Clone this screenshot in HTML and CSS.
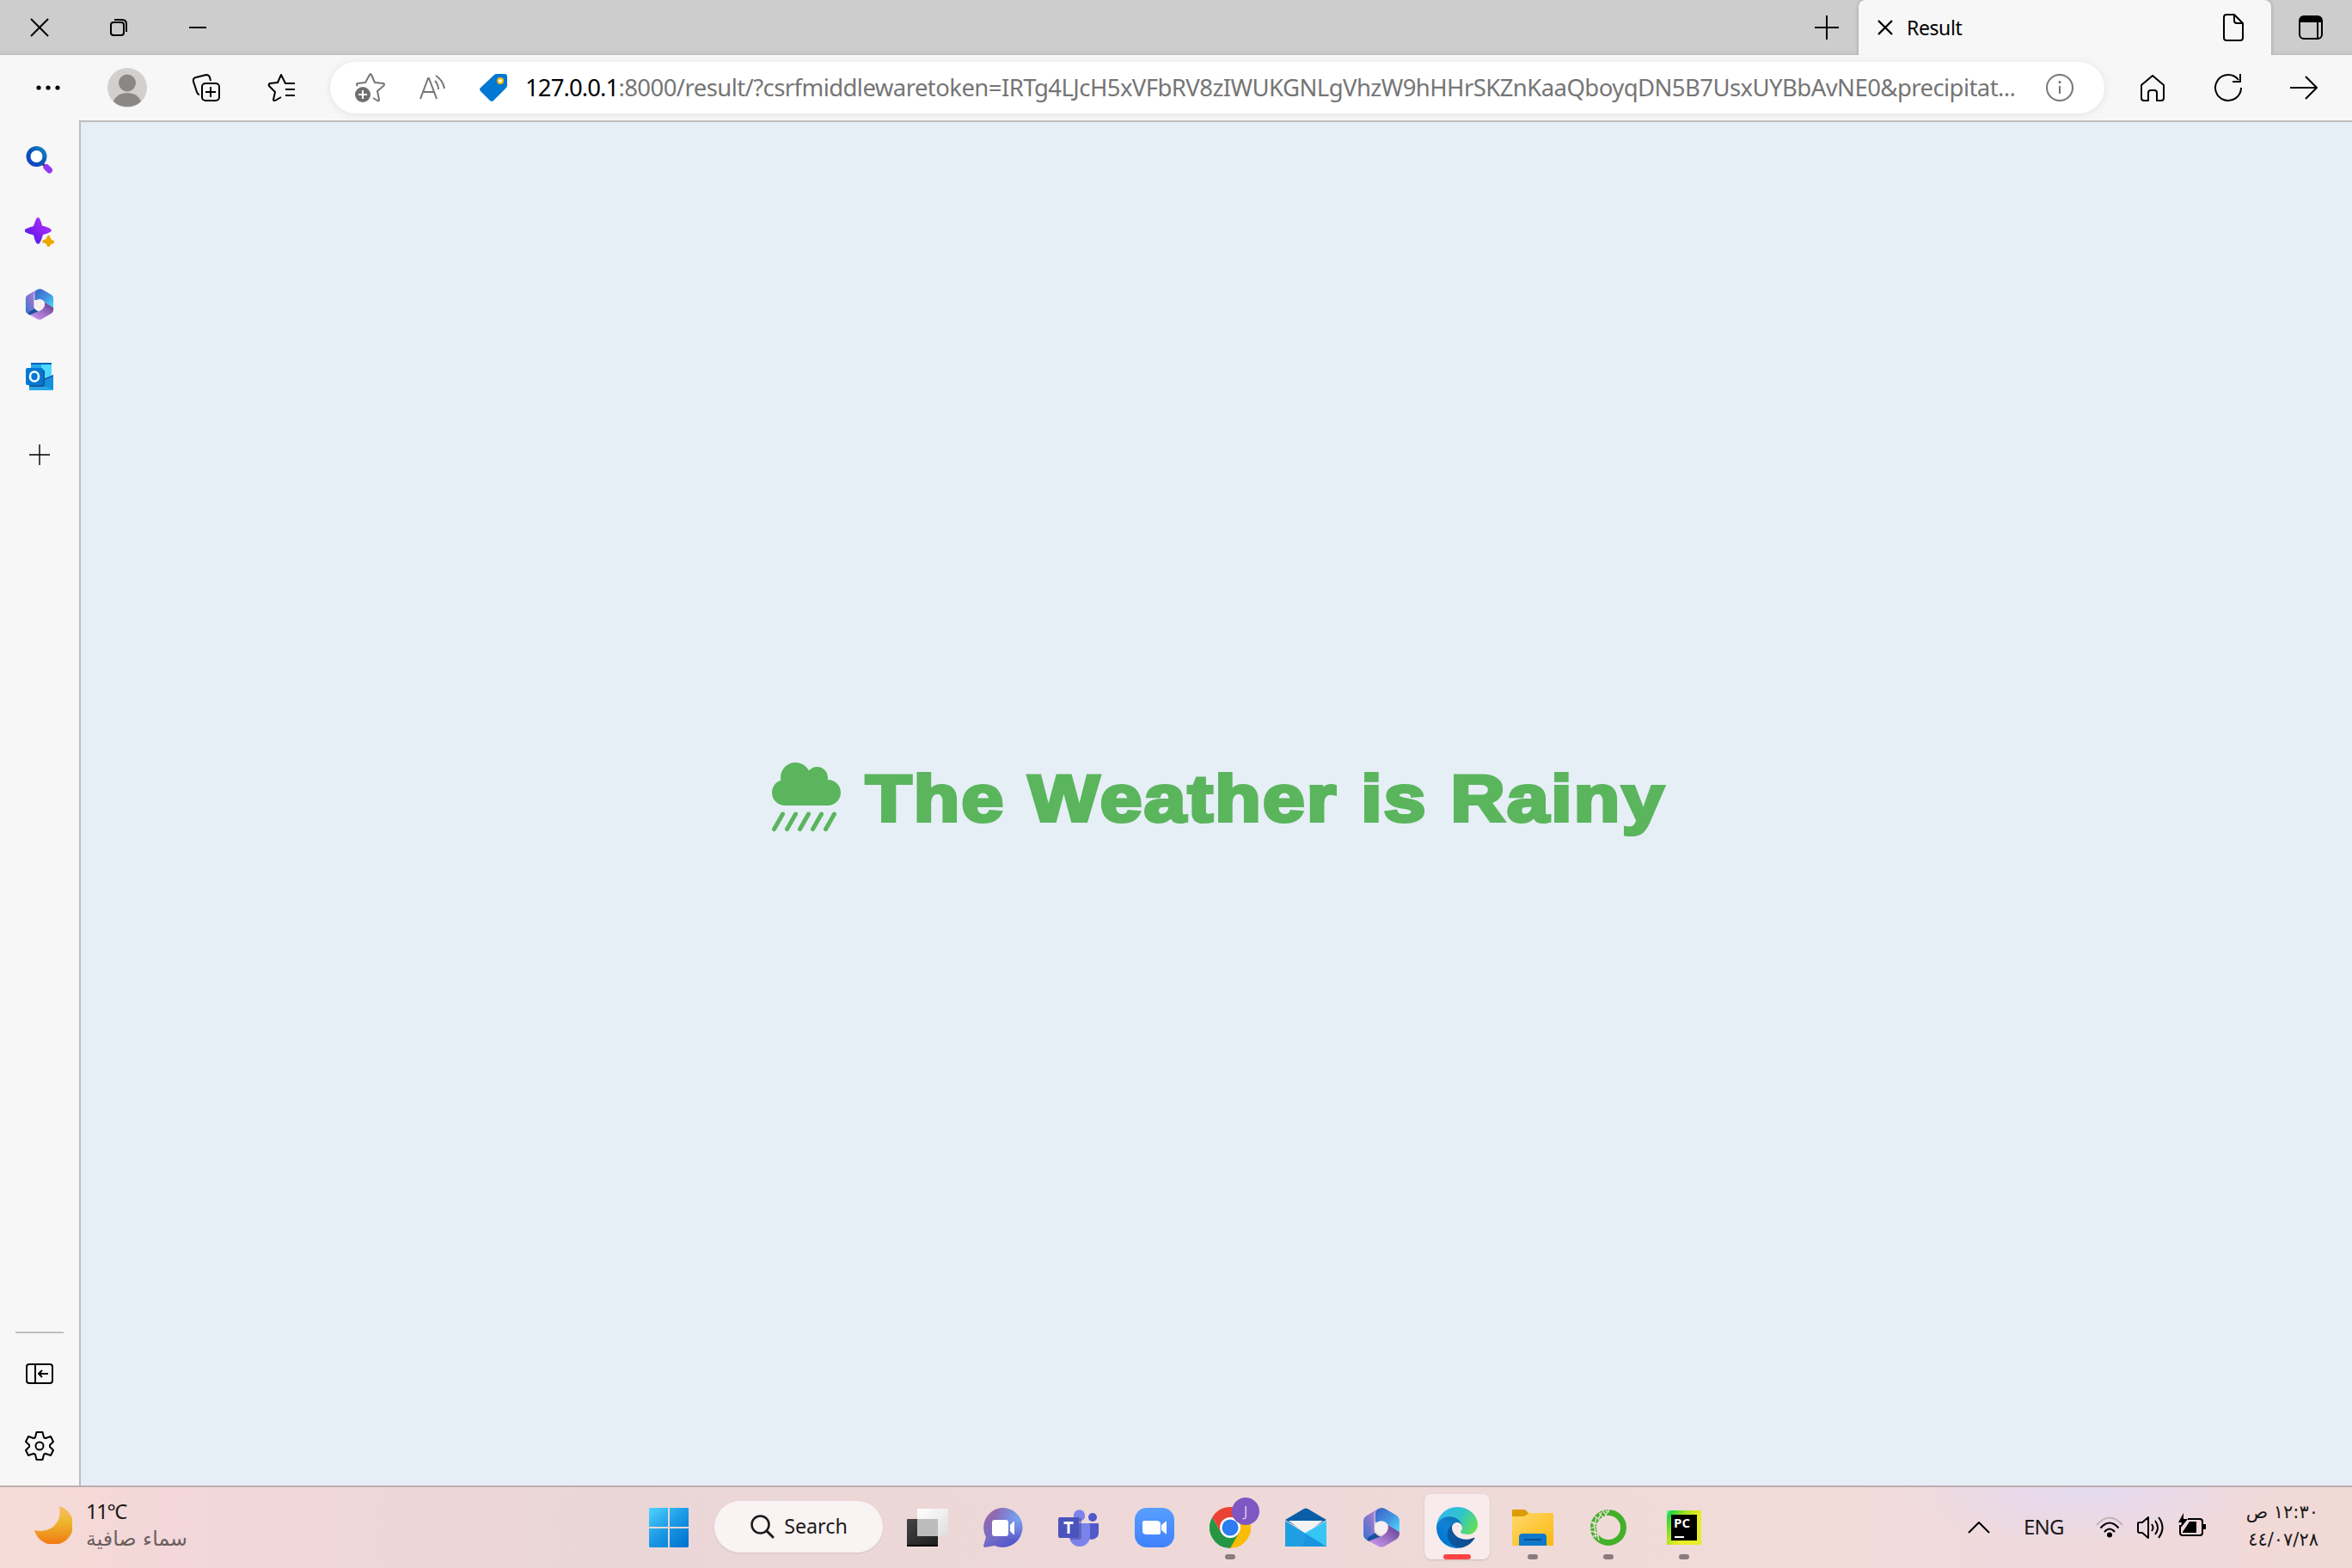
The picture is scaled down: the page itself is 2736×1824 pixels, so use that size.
FILE: index.html
```html
<!DOCTYPE html>
<html lang="en">
<head>
<meta charset="utf-8">
<title>Result</title>
<link rel="stylesheet" href="styles.css">
</head>
<body>
<svg class="defs" width="0" height="0" aria-hidden="true">
  <defs>
    <linearGradient id="ma" x1="1" y1="0" x2="0" y2="1"><stop offset="0" stop-color="#b78be0"/><stop offset=".45" stop-color="#8a75cf"/><stop offset="1" stop-color="#2f74d0"/></linearGradient>
    <linearGradient id="mb" x1="0" y1="0" x2="1" y2="1"><stop offset="0" stop-color="#3b62c4"/><stop offset=".5" stop-color="#438fe0"/><stop offset="1" stop-color="#4be0fb"/></linearGradient>
    <linearGradient id="mc" x1="1" y1="0" x2="0" y2="1"><stop offset="0" stop-color="#5c3a86"/><stop offset=".5" stop-color="#9b6fc4"/><stop offset="1" stop-color="#d39cf8"/></linearGradient>
    <symbol id="m365" viewBox="0 0 40 44">
      <path fill="url(#ma)" d="M14 2.500 3 9Q0 11 0 14v16q0 4 4 6l3 1.500 9-4.500q-4-4-4-8V8q0-4 4-7z"/>
      <path fill="#17519e" d="M4 36q4 2.500 8 .5l7-4.500q-4-1-6-4l-8 5z"/>
      <path fill="url(#mb)" d="M13 16V7q0-5 5-6.500 3-1 6 .5l12 7q4 2.500 4 6.500v13L26 18q-4-4-9-2z"/>
      <path fill="url(#mc)" d="M27 19q1 8-6 12L6 37l11 6q3 1.500 6 0l13-7.500q4-2.500 4-6.500v-2z"/>
      <circle cx="20" cy="22" r="7.400" fill="#f6eff2"/>
    </symbol>
  </defs>
</svg>

<header class="titlebar">
  <div class="slot wide"><svg width="22" height="22" viewBox="0 0 22 22"><path class="ln" d="M1 1l20 20M21 1 1 21"/></svg></div>
  <div class="slot wide"><svg width="22" height="22" viewBox="0 0 22 22"><rect class="ln" x="2" y="5" width="15" height="15" rx="3"/><path class="ln" d="M6 2h9q5 0 5 5v9"/></svg></div>
  <div class="slot wide"><svg width="22" height="22" viewBox="0 0 22 22"><path class="ln" d="M1 11h20"/></svg></div>
  <div class="grow"></div>
  <div class="slot newtab"><svg width="30" height="30" viewBox="0 0 30 30"><path class="ln" d="M15 1v28M1 15h28"/></svg></div>
  <div class="tab">
    <svg width="18" height="18" viewBox="0 0 18 18"><path class="ln heavy" d="M1 1l16 16M17 1 1 17"/></svg>
    <span class="tab-title">Result</span>
    <svg width="26" height="34" viewBox="0 0 26 34"><path class="ln" d="M14 2H5Q2 2 2 5v24q0 3 3 3h16q3 0 3-3V12zM14 2v7q0 3 3 3h7"/></svg>
  </div>
  <div class="slot tabmenu"><svg width="30" height="30" viewBox="0 0 30 30"><rect class="ln" x="2" y="2" width="26" height="26" rx="5"/><path d="M2 9V6q0-4 4-4h18q4 0 4 4v3z"/><path class="ln" d="M23 9v18"/></svg></div>
</header>

<nav class="toolbar">
  <div class="slot more"><svg width="28" height="8" viewBox="0 0 28 8"><circle cx="3" cy="4" r="2.600"/><circle cx="14" cy="4" r="2.600"/><circle cx="25" cy="4" r="2.600"/></svg></div>
  <div class="slot profile"><svg width="46" height="46" viewBox="0 0 46 46"><circle cx="23" cy="23" r="23" fill="#d2d0ce"/><circle cx="23" cy="17.500" r="10" fill="#8a8886"/><path fill="#8a8886" d="M7 39q4-10 16-10t16 10q-6 6-16 6T7 39z"/></svg></div>
  <div class="slot collect"><svg width="34" height="34" viewBox="0 0 34 34"><rect class="ln" x="12" y="12" width="20" height="20" rx="4"/><path class="ln" d="M22 16v12M16 22h12M22 9l-1-4q-1-3-4-3L5 5Q1 6 2 10l4 12q1 3 3 3"/></svg></div>
  <div class="slot favs"><svg width="34" height="34" viewBox="0 0 34 34"><path class="ln" d="M32 12H21L16 2l-4 9-9 1q-2 1-1 3l7 7-2 9q0 1 2 1l7-4M21 19h11M21 26h11"/></svg></div>
  <div class="address">
    <div class="slot star"><svg width="36" height="36" viewBox="0 0 36 36"><path class="ln grey" d="M4 16q-2-2 0-3l9-1 5-9q1-2 2 0l4 9 10 1q2 1 0 3l-7 6 2 10q0 2-2 1l-5-3"/><circle cx="10" cy="26" r="9" fill="#6f6f6f"/><path stroke="#fff" stroke-width="2" d="M10 21v10M5 26h10"/></svg></div>
    <div class="slot read"><svg width="32" height="30" viewBox="0 0 32 30"><path class="ln grey" d="M2 28 11 4h1l9 24M5 20h13M19 7q4 4 4 10M20 1q8 5 10 15"/></svg></div>
    <div class="slot tag"><svg width="32" height="32" viewBox="0 0 32 32"><path fill="#0078d4" d="M17 1q1-1 3-1h9q3 0 3 3v10q0 2-1 3L16 31q-2 2-4 0L1 20q-2-2 0-4z"/><circle cx="24" cy="8" r="3" fill="#fff" stroke="#ffb900" stroke-width="2"/></svg></div>
    <div class="url"><span class="host">127.0.0.1</span>:8000/result/?csrfmiddlewaretoken=IRTg4LJcH5xVFbRV8zIWUKGNLgVhzW9hHHrSKZnKaaQboyqDN5B7UsxUYBbAvNE0&amp;precipitat...</div>
    <div class="slot info"><svg width="32" height="32" viewBox="0 0 32 32"><circle class="ln grey" cx="16" cy="16" r="15"/><path class="ln grey" d="M16 14v9"/><circle cx="16" cy="9.500" r="1.500" fill="#6f6f6f"/></svg></div>
  </div>
  <div class="slot side"><svg width="30" height="32" viewBox="0 0 30 32"><path class="ln" d="M15 2 2 13v15q0 3 3 3h5v-9q0-3 3-3h4q3 0 3 3v9h5q3 0 3-3V13z"/></svg></div>
  <div class="slot reload"><svg width="32" height="34" viewBox="0 0 32 34"><path class="ln" d="M31 17A15 15 0 1 1 28 8M30 1v9h-9"/></svg></div>
  <div class="slot side"><svg width="34" height="30" viewBox="0 0 34 30"><path class="ln" d="M1 15h31M19 2l13 13-13 13"/></svg></div>
</nav>

<div class="middle">
  <aside class="sidebar">
    <div class="cell"><svg width="34" height="34" viewBox="0 0 34 34"><defs><linearGradient id="lens" x1="1" y1="0" x2="0" y2="1"><stop offset="0" stop-color="#1684c4"/><stop offset=".5" stop-color="#0754b7"/><stop offset="1" stop-color="#1545ca"/></linearGradient></defs><path stroke="#433" stroke-width="3" d="M19 20l4 4"/><path stroke="#9237f5" stroke-width="7" stroke-linecap="round" d="M25 25.500l3.500 3.500"/><circle cx="13.500" cy="13" r="9.500" fill="#fff" stroke="url(#lens)" stroke-width="5"/></svg></div>
    <div class="cell"><svg width="34" height="34" viewBox="0 0 34 34"><defs><linearGradient id="spark" x1="1" y1="0" x2="0" y2="1"><stop offset="0" stop-color="#b23cff"/><stop offset=".5" stop-color="#8a20f2"/><stop offset="1" stop-color="#3020e8"/></linearGradient></defs><path fill="url(#spark)" d="M13.500 1q1.500-2 3.500 0 2 4 3 8.500 8 2 10 4 1.500 1.500 0 3-3 2-9 3.500-1.500 6-4 10-2 1.500-3.500 0-2.500-4-3.500-9.500-6-1.500-9.500-3.500-1.500-1.500 0-3.500 3.500-2 9.500-3.500 1.500-5 3.500-9z"/><path fill="#eca900" d="M26.500 21q1-1 2 0l2 4.500 4 2q1 1 0 2l-4 1.500-2 3q-1 1-2 0l-2-3.500-4-1.500q-1-1 0-2l4-2z"/></svg></div>
    <div class="cell"><svg width="34" height="36" viewBox="0 0 40 44"><use href="#m365"/></svg></div>
    <div class="cell"><svg width="32" height="32" viewBox="0 0 32 32"><path fill="#50d9ff" d="M6 1q0-1 1-1h23v20H6z"/><path fill="#28a8ea" d="M6 2h12v13H6z"/><path fill="#0364b8" d="M6 0h24v2H6z"/><path fill="#1490df" d="M4 18l16 2 12-6v17q0 1-1 1H5q-1 0-1-1z"/><path fill="#28a8ea" d="M4 21l28 10-1 1H5q-1 0-1-1z"/><path stroke="#0a5aa5" stroke-width="1.500" d="m20 20 12-5"/><path fill="#165b94" d="M4 8h16q2 0 2 2v15q0 3-3 3H4z"/><rect y="6" width="20" height="20" rx="2" fill="#0078d4"/><ellipse cx="10" cy="16" rx="5" ry="5.500" fill="none" stroke="#fff" stroke-width="2.600"/></svg></div>
    <div class="cell add"><svg width="24" height="24" viewBox="0 0 24 24"><path stroke="#000" stroke-width="1.400" d="M12 0v24M0 12h24"/></svg></div>
    <div class="grow"></div>
    <hr class="rule">
    <div class="cell"><svg width="32" height="24" viewBox="0 0 32 24"><rect class="ln" x="1" y="1" width="30" height="22" rx="3"/><path class="ln" d="M11 1v22M26 12H15M19 8l-4 4 4 4"/></svg></div>
    <div class="cell gear"><svg width="34" height="36" viewBox="0 0 34 36"><path class="ln" d="M13.500 2h7l1.500 6q1 1 2 1l6-2 3 6-4 4v2l4 4-3 6-6-2q-1 0-2 1l-1.500 6h-7L12 28q-1-1-2-1l-6 2-3-6 4-4v-2l-4-4 3-6 6 2q1 0 2-1z"/><circle class="ln" cx="17" cy="18" r="4.500"/></svg></div>
  </aside>
  <main class="page">
    <h1 class="headline">
      <svg width="80" height="80" viewBox="0 0 512 512"><path fill="#5ab55c" d="M416 128c-.6 0-1.100.2-1.600.2 1.100-5.200 1.600-10.600 1.600-16.200 0-44.200-35.800-80-80-80-24.600 0-46.300 11.300-61 28.800C256.400 24.800 219.300 0 176 0 114.100 0 64 50.100 64 112c0 7.300.8 14.300 2.100 21.200C27.800 145.800 0 181.500 0 224c0 53 43 96 96 96h320c53 0 96-43 96-96s-43-96-96-96z"/><path stroke="#5ab55c" stroke-width="32" stroke-linecap="round" d="M80 384 16 496M176 384l-64 112M272 384l-64 112M368 384l-64 112M464 384l-64 112"/></svg>
      <span class="headline-text">The Weather is Rainy</span>
    </h1>
  </main>
</div>

<footer class="taskbar">
  <div class="weather">
    <svg width="44" height="44" viewBox="0 0 44 44"><defs><linearGradient id="moon" x1="0" y1="0" x2="0" y2="1"><stop offset="0" stop-color="#f8bd68"/><stop offset=".4" stop-color="#edb82e"/><stop offset="1" stop-color="#f17813"/></linearGradient></defs><path fill="url(#moon)" d="M29 0A23 23 0 1 1 0 28Q13 31 22 24 32 15 29 0z"/></svg>
    <div class="weather-text"><span class="temp">11°C</span><span class="sky" dir="rtl">سماء صافية</span></div>
  </div>
  <div class="apps">
    <div class="app start"><svg width="46" height="46" viewBox="0 0 46 46"><defs><linearGradient id="win" gradientUnits="userSpaceOnUse" x1="0" y1="0" x2="40" y2="46"><stop offset="0" stop-color="#50d4ff"/><stop offset=".5" stop-color="#1d9be6"/><stop offset="1" stop-color="#0074d0"/></linearGradient></defs><path fill="url(#win)" d="M1 0h21v22H0V1zM24 0h21l1 1v21H24zM0 24h22v22H1l-1-1zM24 24h22v21l-1 1H24z"/></svg></div>
    <div class="search"><svg width="28" height="28" viewBox="0 0 28 28"><circle cx="11.500" cy="11.500" r="10" fill="none" stroke="#1a1a1a" stroke-width="2.600"/><path stroke="#1a1a1a" stroke-width="3" stroke-linecap="round" d="m19 19 7 7"/></svg><span>Search</span></div>
    <div class="app"><svg width="48" height="46" viewBox="0 0 48 46"><defs><linearGradient id="tvd" x1="0" y1="0" x2="1" y2="1"><stop offset="0" stop-color="#444"/><stop offset="1" stop-color="#1c1c1c"/></linearGradient><linearGradient id="tvl" x1="0" y1="0" x2="1" y2="1"><stop offset="0" stop-color="#fff"/><stop offset="1" stop-color="#dedede"/></linearGradient></defs><rect y="13" width="36" height="32" rx="1" fill="url(#tvd)"/><path fill="#000" d="M0 43h36v2H0z"/><rect x="12" y="1" width="36" height="32" rx="1" fill="url(#tvl)"/><path fill="#bcbcbc" d="M12 13h24v20H12z"/></svg></div>
    <div class="app"><svg width="46" height="46" viewBox="0 0 46 46"><defs><linearGradient id="chat" x1=".1" y1=".2" x2=".7" y2=".9"><stop offset="0" stop-color="#9668ac"/><stop offset=".5" stop-color="#766dc6"/><stop offset="1" stop-color="#5558cb"/></linearGradient><radialGradient id="chatglow" cx=".9" cy=".25" r=".6"><stop offset="0" stop-color="#7ba4f4"/><stop offset="1" stop-color="#7ba4f4" stop-opacity="0"/></radialGradient></defs><path fill="url(#chat)" d="M23 0a23 23 0 1 1-10 44L2 46q-2 0-2-2l3-10A23 23 0 0 1 23 0z"/><path fill="url(#chatglow)" d="M23 0a23 23 0 1 1-10 44L2 46q-2 0-2-2l3-10A23 23 0 0 1 23 0z"/><rect x="10" y="14" width="19" height="19" rx="3" fill="#fff"/><path fill="#fff" d="m31 20 4-4h1v15h-1l-4-4z"/></svg></div>
    <div class="app"><svg width="48" height="44" viewBox="0 0 48 44"><circle cx="40" cy="10" r="5" fill="#5059c9"/><path fill="#5059c9" d="M34 17h12q1 0 1 1v10a8 8 0 0 1-13 6z"/><circle cx="24.500" cy="8" r="6.700" fill="#7b83eb"/><path fill="#7b83eb" d="M13 17h22q2 0 2 2v13a11.500 11.500 0 0 1-24 0z"/><path fill="#424a9b" opacity=".5" d="M15 10h8q4 0 4 3v20q0 3-3 3H14z"/><rect y="10" width="24" height="24" rx="2" fill="#4b53bc"/><path fill="none" stroke="#fff" stroke-width="3" d="M6.500 16.500h11M12 16v13"/></svg></div>
    <div class="app"><svg width="46" height="46" viewBox="0 0 46 46"><defs><linearGradient id="zm" x1="0" y1="0" x2="0" y2="1"><stop offset="0" stop-color="#589fff"/><stop offset="1" stop-color="#3f81fb"/></linearGradient></defs><rect width="46" height="46" rx="14" fill="url(#zm)"/><path fill="#fff" d="M9 17q0-2 2-2h14q5 0 5 4v10q0 2-2 2H14q-5 0-5-4zM31 20l5-4q1-1 1 0v14q0 1-1 0l-5-4z"/></svg></div>
    <div class="app">
      <svg width="48" height="48" viewBox="0 0 48 48"><path fill="#ea4335" d="M24 24 3.200 12a24 24 0 0 1 41.600 0z"/><path fill="#fbbc04" d="M24 24l10-12h10.800A24 24 0 0 1 24 48z"/><path fill="#259644" d="M3.200 12A24 24 0 0 0 24 48l10.400-18H13.600z"/><path fill="#ea4335" d="M3.200 12 13.600 30 24 12z"/><circle cx="24" cy="24" r="12" fill="#fff"/><circle cx="24" cy="24" r="9.500" fill="#2b7df0"/></svg>
      <span class="badge">J</span><i class="dot"></i></div>
    <div class="app"><svg width="48" height="46" viewBox="0 0 48 46"><path fill="#0a5ea8" d="M0 14 22 1q2-1 4 0l22 13-24 14z"/><path fill="#f3f3f3" d="M4 15h40L24 30z"/><path fill="#37c6f4" d="M48 15v30L22 30z"/><path fill="#1f9fe2" d="M0 15l48 30H0z"/><path fill="#1590dd" opacity=".6" d="M20 45 25 31 48 45z"/></svg></div>
    <div class="app"><svg width="42" height="46" viewBox="0 0 40 44"><use href="#m365"/></svg></div>
    <div class="app active"><svg width="48" height="48" viewBox="4.63 4.92 256 256"><defs><linearGradient id="e1" x1="0" y1="0" x2="1" y2="0"><stop offset="0" stop-color="#0c59a4"/><stop offset="1" stop-color="#114a8b"/></linearGradient><linearGradient id="e2" x1=".9" y1=".1" x2=".4" y2=".9"><stop offset="0" stop-color="#0f6fae"/><stop offset=".5" stop-color="#1282d5"/><stop offset="1" stop-color="#0078d4"/></linearGradient><linearGradient id="e3" x1="0" y1=".3" x2="1" y2=".7"><stop offset="0" stop-color="#35b7f0"/><stop offset=".5" stop-color="#2fc4cc"/><stop offset="1" stop-color="#66e052"/></linearGradient></defs><path fill="url(#e1)" d="M235.680 195.460a93.730 93.730 0 0 1-10.540 4.710 101.870 101.870 0 0 1-35.900 6.460c-47.320 0-88.540-32.550-88.540-74.320A31.480 31.480 0 0 1 117.130 105c-42.800 1.800-53.800 46.400-53.800 72.530 0 73.880 68.090 81.370 82.760 81.370 7.910 0 19.840-2.300 27-4.560l1.310-.44a128.340 128.340 0 0 0 66.600-52.800 4 4 0 0 0-5.320-5.640z"/><path fill="url(#e2)" d="M110.340 246.340A79.200 79.200 0 0 1 87.600 225a80.720 80.720 0 0 1 29.530-120c3.120-1.470 8.450-4.130 15.540-4a32.350 32.350 0 0 1 25.690 13 31.880 31.880 0 0 1 6.360 18.660c0-.21 24.460-79.600-80-79.600-43.900 0-80 41.660-80 78.210a130.150 130.150 0 0 0 12.110 56 128 128 0 0 0 156.380 67.110 75.550 75.550 0 0 1-62.780-8z"/><path fill="url(#e3)" d="M156.940 153.780c-.81 1.050-3.300 2.500-3.300 5.660 0 2.610 1.700 5.120 4.720 7.230 14.380 10 41.490 8.680 41.560 8.680a59.560 59.560 0 0 0 30.270-8.350A61.380 61.380 0 0 0 260.620 114c.26-22.410-8-37.310-11.340-43.910C228.090 28.760 182.350 5 132.630 5a128 128 0 0 0-128 126.200c.48-36.540 36.800-66.050 80-66.050 3.500 0 23.460.34 42 10.070 16.340 8.580 24.900 18.940 30.850 29.210 6.180 10.670 7.280 24.150 7.280 29.520 0 5.370-2.740 13.330-7.820 19.830z"/></svg><i class="dot red"></i></div>
    <div class="app"><svg width="48" height="44" viewBox="0 0 48 44"><defs><linearGradient id="fold" x1="0" y1="0" x2="1" y2="1"><stop offset="0" stop-color="#ffd86b"/><stop offset="1" stop-color="#fcb80e"/></linearGradient></defs><path fill="#dc9c04" d="M0 2q0-1 1-1h14l5 5v8H0z"/><path fill="url(#fold)" d="M0 9h14l6-4h27q1 0 1 1v36q0 1-1 1H1q-1 0-1-1z"/><path fill="#0f78cb" d="M8 43V33q0-4 4-4h24q4 0 4 4v10z"/><path stroke="#0a4f93" stroke-width="2" d="M14 36h20"/></svg><i class="dot"></i></div>
    <div class="app"><svg width="42" height="42" viewBox="0 0 42 42"><circle cx="21" cy="21" r="17.500" fill="none" stroke="#43b02a" stroke-width="7"/><path fill="none" stroke="#f0deda" stroke-width="1.300" d="M22 0l-5 8M14 1l5 6M10 4l5 5M13 3 9 12M5 8l6 3M7 9l-2 9M1 15l8 2M3 14l3 11M0 22l8-3M0 25l8 2M5 21l1 12M3 31l7-1M8 27l2 9M17 1l5 2"/></svg><i class="dot"></i></div>
    <div class="app"><svg width="40" height="40" viewBox="0 0 40 40"><defs><linearGradient id="pc" x1="0" y1="0" x2=".7" y2=".5"><stop offset="0" stop-color="#8ff5b0"/><stop offset=".15" stop-color="#1fd83c"/><stop offset=".55" stop-color="#a5e020"/><stop offset="1" stop-color="#eaed26"/></linearGradient></defs><path fill="url(#pc)" d="M0 0h40v40H0z"/><path d="M5 5h30v30H5z"/><path fill="#fff" d="M9 30h11v2H9z"/><text x="8" y="20" class="pc-text">PC</text></svg><i class="dot"></i></div>
  </div>
  <div class="grow"></div>
  <div class="tray">
    <svg width="28" height="16" viewBox="0 0 28 16"><path class="ln" d="M2 14 14 2l12 12"/></svg>
    <span class="lang">ENG</span>
    <svg class="wifi" width="32" height="26" viewBox="0 0 32 26"><path fill="none" stroke="#c2b1b5" stroke-width="2" d="M1 10q15-17 30 0"/><path class="ln" d="M5.500 13.500q10.500-12 21 0M10 18q6-7 12 0"/><circle cx="16" cy="21.500" r="3"/></svg>
    <svg class="sound" width="32" height="28" viewBox="0 0 32 28"><path class="ln" d="M1 9v9q0 2 2 2h3l7 6V2L6 8H3Q1 8 1 9zM17 10q3 4 0 8M21 6q6 8 0 16M25 2q9 12 0 24"/></svg>
    <svg class="battery" width="32" height="28" viewBox="0 0 32 28"><path class="ln" d="M11 7h14q3 0 3 3v13q0 3-3 3H5q-3 0-3-3v-9"/><path d="M29 13h3v6h-3zM5 22l8-12h8v13H5z"/><path d="M6 0 0 11h4L2 18l9-11H6z"/></svg>
    <div class="clock" dir="rtl"><span class="time">١٢:٣٠ ص</span><span class="date">٤٤/٠٧/٢٨</span></div>
  </div>
</footer>
</body>
</html>
```
FILE: styles.css
```css
* { box-sizing: border-box; }
body {
  margin: 0;
  width: 2736px;
  height: 1824px;
  display: flex;
  flex-direction: column;
  overflow: hidden;
  font-family: "Noto Sans", "Open Sans", sans-serif;
  color: #000;
}
.defs { position: absolute; }
svg { display: block; flex: none; }
.ln { fill: none; stroke: #000; stroke-width: 2; stroke-linejoin: round; }
.ln.heavy { stroke-width: 2.4; }
.ln.grey { stroke: #757575; }
.grow { flex: 1; }
.slot { display: flex; align-items: center; justify-content: center; flex: none; }

.titlebar {
  height: 64px;
  display: flex;
  background: linear-gradient(#cdcdcd 58px, #c9c9c9 62px, #b9b9b9 64px);
}
.wide { width: 92px; }
.newtab { width: 74px; }
.tabmenu { width: 94px; padding-right: 2px; }
.tab {
  width: 480px;
  display: flex;
  align-items: center;
  padding: 0 31px 0 22px;
  background: #f7f7f7;
  border-radius: 8px 8px 0 0;
  box-shadow: 0 0 4px #999;
  clip-path: inset(0 -6px 0 -6px);
}
.tab-title { flex: 1; margin-left: 16px; font-size: 23px; letter-spacing: -0.4px; }

.toolbar { height: 76px; display: flex; align-items: center; background: #f7f7f7; }
.more, .collect, .side { width: 112px; }
.profile { width: 72px; }
.favs, .reload { width: 64px; }
.address {
  width: 2064px;
  height: 60px;
  margin-left: 24px;
  display: flex;
  align-items: center;
  background: #fff;
  border-radius: 30px;
  box-shadow: 0 1px 8px #e2e2e2;
}
.address .slot { height: 60px; }
.star { width: 90px; padding-left: 1px; }
.read { width: 58px; }
.tag { width: 79px; padding-left: 5px; }
.info { width: 104px; }
.url { flex: 1; min-width: 0; white-space: nowrap; font-size: 27.5px; line-height: 60px; letter-spacing: -0.57px; color: #757575; }
.host { color: #000; letter-spacing: -0.9px; }

.middle { height: 1588px; display: flex; }
.sidebar {
  width: 92px;
  display: flex;
  flex-direction: column;
  align-items: center;
  padding: 4px 0 4px;
  background: #f7f7f7;
}
.cell { height: 84px; display: flex; align-items: center; justify-content: center; flex: none; }
.add { height: 98px; }
.rule { width: 56px; height: 2px; margin: 0 0 5px; border: 0; background: #bfbfbf; }
.page {
  flex: 1;
  display: flex;
  align-items: center;
  justify-content: center;
  padding-bottom: 16px;
  background: #e6eef6;
  border: 2px solid #bdbdbd;
  border-width: 2px 0 0 2px;
}
.headline {
  margin: 0;
  display: flex;
  align-items: center;
  gap: 29px;
  color: #5ab55c;
  font: 700 76px/120px "Liberation Sans", Arial, sans-serif;
  letter-spacing: 2.1px;
  white-space: nowrap;
}
.headline-text {
  width: 925px;
  padding-top: 4px;
  transform: scaleX(1.15);
  transform-origin: 0 0;
  -webkit-text-stroke: 4px #5ab55c;
}

.taskbar {
  height: 96px;
  display: flex;
  border-top: 2px solid #bdaeb1;
  background:
    radial-gradient(ellipse 220px 70px at 2430px 0, #e4daf1, transparent),
    linear-gradient(90deg, #f6dcd6 0, #f3d7d9 200px, #ead6d7 720px, #eed8d8 1300px, #efdad8 1800px, #f2dcd9 2100px, #efd9dd 2350px, #f2d9d9 2600px, #f0dad5);
}
.weather { display: flex; width: 735px; padding-left: 40px; gap: 16px; }
.weather > svg { margin-top: 22px; }
.weather-text { display: flex; flex-direction: column; align-items: flex-start; font-size: 24px; line-height: 32px; padding-top: 12px; color: #1a1a1a; }
.temp { letter-spacing: -1.5px; }
.sky { font-family: "DejaVu Sans", sans-serif; font-size: 23.7px; color: #6b5f60; white-space: nowrap; }
.apps { display: flex; height: 94px; }
.app { position: relative; width: 88px; display: flex; align-items: center; justify-content: center; }
.start { width: 86px; }
.search {
  width: 196px;
  height: 60px;
  margin: 16px 8px 0 10px;
  display: flex;
  align-items: center;
  justify-content: center;
  gap: 11px;
  padding-left: 1px;
  border-radius: 30px;
  background: #f9f3f3;
  box-shadow: 0 1px 2px #d4c3c4;
  font-size: 23.3px;
  line-height: 56px;
  color: #1a1a1a;
}
.search span { margin-top: -2px; }
.active::before {
  content: "";
  position: absolute;
  inset: 8px 6px 10px;
  border-radius: 8px;
  background: #f7ebeb;
  box-shadow: 0 1px 2px #cbb9bb;
}
.active > svg { position: relative; }
.dot { position: absolute; left: 38px; top: 78px; width: 12px; height: 6px; border-radius: 3px; background: #8a7c7d; }
.dot.red { left: 28px; width: 32px; background: #ff4343; }
.badge {
  position: absolute;
  left: 46px;
  top: 12px;
  width: 32px;
  height: 32px;
  border-radius: 50%;
  background: #7e57c2;
  color: #d9c8f0;
  font-size: 17px;
  line-height: 31px;
  text-align: center;
}
.pc-text { font: 700 15px "Open Sans", sans-serif; fill: #fff; }
.tray { display: flex; align-items: center; height: 94px; padding-right: 39px; }
.lang { width: 84px; margin: -3px 0 0 38px; font-size: 24px; letter-spacing: -0.8px; color: #1a1a1a; }
.sound { margin-left: 16px; }
.battery { margin: -6px 0 0 16px; }
.clock { width: 131px; display: flex; flex-direction: column; font-family: "DejaVu Sans", sans-serif; font-size: 21px; line-height: 32px; margin-top: -5px; color: #1a1a1a; white-space: nowrap; }
```
